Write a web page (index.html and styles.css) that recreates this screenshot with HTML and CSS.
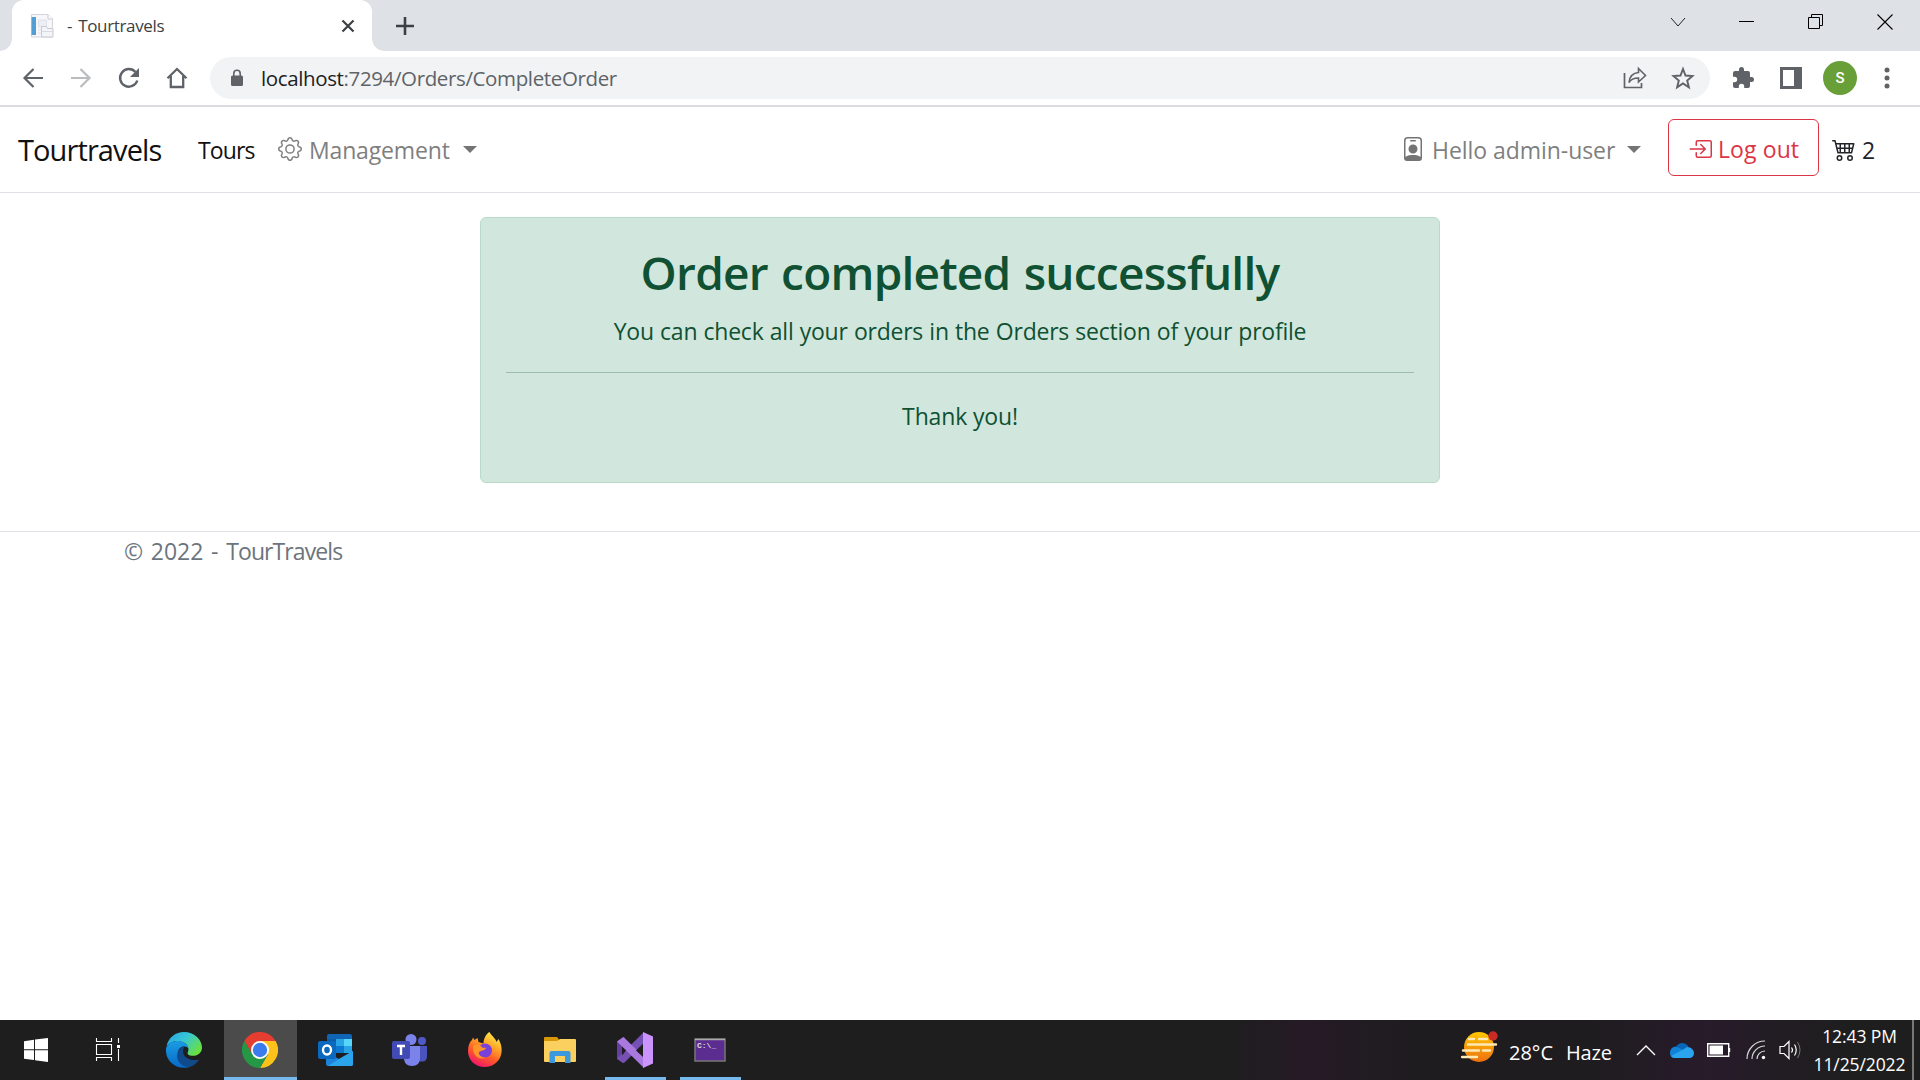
FILE: index.html
```html
<!DOCTYPE html>
<html lang="en">
<head>
<meta charset="utf-8">
<title>- Tourtravels</title>
<link rel="stylesheet" href="styles.css">
</head>
<body>
<header class="tabstrip">
  <div class="tab">
    <svg class="favicon" width="24" height="24" viewBox="0 0 24 24"><path d="M1.500 .5H18l4.500 4.500V23H1.500z" fill="#f7f7f9" stroke="#d5d6da"/><path d="M18 .5V5h4.500" fill="#fff" stroke="#c9cbd0"/><path d="M1.500 3H6v18H1.500z" fill="#539fd3"/><path d="M8.500 6h8v7h-8z" fill="#eceef4" stroke="#dfe2ea"/><path d="M8 16h3M8 19h3" stroke="#dfe2ea"/><path d="M11.500 12.500h5l1 2h5.500v8.500H11.500z" fill="#f3f4f8" stroke="#c8cbd3"/><path d="M12 17.500h11" stroke="#d8dbe3"/></svg>
    <span class="tab-title">- Tourtravels</span>
    <svg class="tab-close" width="14" height="14" viewBox="0 0 14 14"><path d="M1.500 1.500l11 11M12.500 1.500l-11 11" stroke="#3c4043" stroke-width="2.200"/></svg>
  </div>
  <svg class="new-tab" width="18" height="18" viewBox="0 0 18 18"><path d="M9 0v18M0 9h18" stroke="#3c4043" stroke-width="2.600"/></svg>
  <div class="window-controls">
    <svg width="16" height="16" viewBox="0 0 16 16"><path d="M1 4l7 8 7-8" fill="none" stroke="#222"/></svg>
    <svg width="16" height="16" viewBox="0 0 16 16"><path d="M0 7.500h15" stroke="#000"/></svg>
    <svg width="16" height="16" viewBox="0 0 16 16"><path d="M.5 3.500h11v11H.5zM3.500 3.500V.5h11v11h-3" fill="none" stroke="#000"/></svg>
    <svg width="16" height="16" viewBox="0 0 16 16"><path d="M.5 .5l15 15M15.500 .5l-15 15" stroke="#000" stroke-width="1.100"/></svg>
  </div>
</header>
<div class="toolbar">
  <div class="nav-buttons">
    <svg width="24" height="24" viewBox="0 0 24 24"><path d="M22 12H4M12.500 3L3.500 12l9 9" fill="none" stroke="#5f6368" stroke-width="2.200"/></svg>
    <svg width="24" height="24" viewBox="0 0 24 24"><path d="M2 12h18M11.500 3l9 9-9 9" fill="none" stroke="#babcbe" stroke-width="2.200"/></svg>
    <svg width="24" height="24" viewBox="0 0 24 24"><path d="M20.300 14.500A8.800 8.800 0 1 1 18.500 6" fill="none" stroke="#5f6368" stroke-width="2.400"/><path d="M22 2v9h-9z" fill="#5f6368"/></svg>
    <svg width="24" height="24" viewBox="0 0 24 24"><path d="M2.500 12.300L12 3l9.500 9.300M5.800 10v11h12.400V10" fill="none" stroke="#5f6368" stroke-width="2.300"/></svg>
  </div>
  <div class="omnibox">
    <svg class="lock" width="14" height="18" viewBox="0 0 14 18"><rect x="1" y="6.500" width="12" height="10.500" rx="1.500" fill="#5f6368"/><path d="M3.800 7V4.500a3.200 3.200 0 0 1 6.400 0V7" fill="none" stroke="#5f6368" stroke-width="1.600"/></svg>
    <span class="url"><span class="host">localhost</span>:7294/Orders/CompleteOrder</span>
    <svg class="share" width="24" height="24" viewBox="0 0 24 24"><path d="M1.500 7v14.500h17V17" fill="none" stroke="#5f6368" stroke-width="1.700"/><path d="M15.500 2.500l7 7-7 6.500v-4c-5 0-7.800 1.500-9.500 4.500.5-5.500 3.500-9.500 9.500-10z" fill="none" stroke="#5f6368" stroke-width="1.600"/></svg>
    <svg width="24" height="24" viewBox="0 0 24 24"><path d="M12 3l2.500 6.500 7 .5-5.300 4.500 1.700 6.800L12 17.500l-5.900 3.800 1.700-6.800L2.500 10l7-.5z" fill="none" stroke="#5f6368" stroke-width="1.900"/></svg>
  </div>
  <div class="toolbar-actions">
    <svg width="24" height="24" viewBox="0 0 24 24"><path d="M20.500 11H19V7a2 2 0 0 0-2-2h-4V3.500a2.500 2.500 0 0 0-5 0V5H4a2 2 0 0 0-2 2v3.800h1.500a2.700 2.700 0 0 1 0 5.400H2V20a2 2 0 0 0 2 2h3.800v-1.500a2.700 2.700 0 0 1 5.400 0V22H17a2 2 0 0 0 2-2v-4h1.500a2.500 2.500 0 0 0 0-5z" fill="#5f6368"/></svg>
    <svg class="panel" width="22" height="22" viewBox="0 0 22 22"><path d="M0 0h22v22H0zM3 3v16h11V3z" fill="#5f6368" fill-rule="evenodd"/></svg>
    <span class="avatar">S</span>
    <svg class="dots" width="6" height="22" viewBox="0 0 6 22"><g fill="#5f6368"><circle cx="3" cy="3" r="2.500"/><circle cx="3" cy="11" r="2.500"/><circle cx="3" cy="19" r="2.500"/></g></svg>
  </div>
</div>
<nav class="navbar">
  <span class="brand">Tourtravels</span>
  <span class="tours">Tours</span>
  <svg class="gear" width="24" height="24" viewBox="0 0 16 16" fill="#7f7f7f"><path d="M8 4.754a3.246 3.246 0 1 0 0 6.492 3.246 3.246 0 0 0 0-6.492zM5.754 8a2.246 2.246 0 1 1 4.492 0 2.246 2.246 0 0 1-4.492 0z"/><path d="M9.796 1.343c-.527-1.790-3.065-1.790-3.592 0l-.094.319a.873.873 0 0 1-1.255.52l-.292-.16c-1.640-.892-3.433.902-2.540 2.541l.159.292a.873.873 0 0 1-.52 1.255l-.319.094c-1.790.527-1.790 3.065 0 3.592l.319.094a.873.873 0 0 1 .52 1.255l-.16.292c-.892 1.640.901 3.434 2.541 2.540l.292-.159a.873.873 0 0 1 1.255.52l.094.319c.527 1.790 3.065 1.790 3.592 0l.094-.319a.873.873 0 0 1 1.255-.52l.292.16c1.640.893 3.434-.902 2.540-2.541l-.159-.292a.873.873 0 0 1 .52-1.255l.319-.094c1.790-.527 1.790-3.065 0-3.592l-.319-.094a.873.873 0 0 1-.52-1.255l.16-.292c.893-1.640-.902-3.433-2.541-2.540l-.292.159a.873.873 0 0 1-1.255-.52l-.094-.319zm-2.633.283c.246-.835 1.428-.835 1.674 0l.094.319a1.873 1.873 0 0 0 2.693 1.115l.291-.16c.764-.415 1.600.42 1.184 1.185l-.159.292a1.873 1.873 0 0 0 1.116 2.692l.318.094c.835.246.835 1.428 0 1.674l-.319.094a1.873 1.873 0 0 0-1.115 2.693l.16.291c.415.764-.42 1.600-1.185 1.184l-.291-.159a1.873 1.873 0 0 0-2.693 1.116l-.094.318c-.246.835-1.428.835-1.674 0l-.094-.319a1.873 1.873 0 0 0-2.692-1.115l-.292.16c-.764.415-1.600-.42-1.184-1.185l.159-.291A1.873 1.873 0 0 0 1.945 8.930l-.319-.094c-.835-.246-.835-1.428 0-1.674l.319-.094A1.873 1.873 0 0 0 3.060 4.377l-.16-.292c-.415-.764.42-1.600 1.185-1.184l.292.159a1.873 1.873 0 0 0 2.692-1.115l.094-.319z"/></svg>
  <span class="management">Management</span>
  <span class="caret"></span>
  <svg class="badge" width="24" height="24" viewBox="0 0 16 16" fill="#747474"><path d="M6.500 2a.5.5 0 0 0 0 1h3a.5.5 0 0 0 0-1h-3zM11 8a3 3 0 1 1-6 0 3 3 0 0 1 6 0z"/><path d="M4.500 0A2.500 2.500 0 0 0 2 2.500V14a2 2 0 0 0 2 2h8a2 2 0 0 0 2-2V2.500A2.500 2.500 0 0 0 11.500 0h-7zM3 2.500A1.500 1.500 0 0 1 4.500 1h7A1.500 1.500 0 0 1 13 2.500v10.795a4.200 4.200 0 0 0-.776-.492C11.392 12.387 10.063 12 8 12s-3.392.387-4.224.803a4.200 4.200 0 0 0-.776.492V2.500z"/></svg>
  <span class="hello">Hello admin-user</span>
  <span class="caret"></span>
  <span class="logout">
    <svg width="24" height="24" viewBox="0 0 16 16" fill="#dc3545"><path d="M6 3.500a.5.5 0 0 1 .5-.5h8a.5.5 0 0 1 .5.5v9a.5.5 0 0 1-.5.5h-8a.5.5 0 0 1-.5-.5v-2a.5.5 0 0 0-1 0v2A1.500 1.500 0 0 0 6.500 14h8a1.500 1.500 0 0 0 1.500-1.500v-9A1.500 1.500 0 0 0 14.500 2h-8A1.500 1.500 0 0 0 5 3.500v2a.5.5 0 0 0 1 0v-2z"/><path d="M11.854 8.354a.5.5 0 0 0 0-.708l-3-3a.5.5 0 1 0-.708.708L10.293 7.500H1.500a.5.5 0 0 0 0 1h8.793l-2.147 2.146a.5.5 0 0 0 .708.708l3-3z"/></svg>
    <span class="logout-text">Log out</span>
  </span>
  <svg class="cart" width="24" height="24" viewBox="0 0 16 16" fill="#212529"><path d="M0 2.500A.5.5 0 0 1 .5 2H2a.5.5 0 0 1 .485.379L2.890 4H14.500a.5.5 0 0 1 .485.621l-1.500 6A.5.5 0 0 1 13 11H4a.5.5 0 0 1-.485-.379L1.610 3H.5a.5.5 0 0 1-.5-.5zM3.140 5l.5 2H5V5H3.140zM6 5v2h2V5H6zm3 0v2h2V5H9zm3 0v2h1.360l.5-2H12zm1.110 3H12v2h.610l.5-2zM11 8H9v2h2V8zM8 8H6v2h2V8zM5 8H3.890l.5 2H5V8zm0 5a1 1 0 1 0 0 2 1 1 0 0 0 0-2zm-2 1a2 2 0 1 1 4 0 2 2 0 0 1-4 0zm9-1a1 1 0 1 0 0 2 1 1 0 0 0 0-2zm-2 1a2 2 0 1 1 4 0 2 2 0 0 1-4 0z"/></svg>
  <span class="count">2</span>
</nav>
<main class="page">
  <section class="alert">
    <h1 class="alert-title">Order completed successfully</h1>
    <p class="alert-text">You can check all your orders in the Orders section of your profile</p>
    <hr class="rule">
    <p class="thanks">Thank you!</p>
  </section>
</main>
<footer class="footer">© 2022 - <span class="company">TourTravels</span></footer>
<div class="taskbar">
  <div class="apps">
    <div class="app start"><svg width="24" height="24" viewBox="0 0 24 24"><path d="M0 3.200l10-1.500V11.200H0zM11 1.500L24 0v11.200H11zM0 12.300h10v9.800L0 20.800zM11 12.300h13V24l-13-1.700z" fill="#fff"/></svg></div>
    <div class="app task-view"><svg width="26" height="26" viewBox="0 0 26 26"><path d="M1.500 1v3.500h15V1M1.500 7.500h15v10h-15zM1.500 24v-3.500h15V24M23.500 1v5M23.500 12v12" fill="none" stroke="#fff" stroke-width="1.100"/><path d="M22 8h3v3h-3z" fill="#fff"/></svg></div>
    <div class="app edge"><svg width="36" height="36" viewBox="0 0 36 36"><defs><linearGradient id="edgeTop" x1="0" y1="0" x2="1" y2=".6"><stop offset="0" stop-color="#269fe2"/><stop offset=".5" stop-color="#36c6d6"/><stop offset="1" stop-color="#68e043"/></linearGradient><linearGradient id="edgeLow" x1="0" y1="0" x2="0" y2="1"><stop offset="0" stop-color="#1b9de4"/><stop offset="1" stop-color="#0868c7"/></linearGradient></defs><path d="M.5 14C3 5 9.500 0 18 0c10 0 18 7.500 18 15.500 0 5-4 8.300-9 8.300-4 0-6.500-1.500-5-4C24 15 20 9.500 12 9 7 9 3 11 .5 14z" fill="url(#edgeTop)"/><path d="M.1 16C2 11 6.500 9 12 9c6 0 10.500 4 10.500 7.500C20 13 13 14 12 20c-.8 6 4 12 10.500 15.400C10 38-1.500 29 .1 16z" fill="url(#edgeLow)"/><path d="M18.500 14C8 18 8 32 22 35.400c5-1 9-4.500 11.300-8.500-3 1.500-8 1.500-12-.8-4.300-2.500-5.300-7.600-2.800-12.100z" fill="#114a8b"/><path d="M18.500 14.300c-1.700 2-1.800 7 2 10.300 4 3 9 2.500 12.500.7l1 .3-.7 1.300c-3 1.500-8 1.500-12-.8-4.300-2.500-5.300-7.600-2.800-11.800z" fill="#1e1e1e"/></svg></div>
    <div class="app chrome"><svg width="36" height="36" viewBox="0 0 36 36"><path d="M2.400 9A18 18 0 0 1 33.600 9H18L10.200 22.500z" fill="#e53d30"/><path d="M33.600 9A18 18 0 0 1 18 36l7.800-13.500L18 9z" fill="#fcc21b"/><path d="M18 36A18 18 0 0 1 2.400 9l7.800 13.500L25.800 22.500z" fill="#259845"/><circle cx="18" cy="18" r="9" fill="#fff"/><circle cx="18" cy="18" r="7.200" fill="#3a7bed"/></svg></div>
    <div class="app"><svg width="36" height="34" viewBox="0 0 36 34"><path d="M10 3q0-2 2-2h21q2 0 2 2v15H10z" fill="#1066b5"/><path d="M10 6h9v7h-9z" fill="#0f5ba6"/><path d="M19 6h8v7h-8z" fill="#29a5e7"/><path d="M27 6h8v7h-8z" fill="#56d7fa"/><path d="M19 13h8v7h-8z" fill="#0d78cf"/><path d="M27 13h8v7h-8z" fill="#28a3e8"/><path d="M9 19l13 7 14-8v13q0 2-2 2H11q-2 0-2-2z" fill="#1c83da"/><path d="M36 18v13q0 2-2 2H11l11-7z" fill="#2ba4ec"/><rect x="1" y="8" width="18" height="18" rx="2" fill="#0b68bf"/><ellipse cx="10" cy="17" rx="4" ry="4.500" fill="none" stroke="#fff" stroke-width="2.400"/></svg></div>
    <div class="app"><svg width="36" height="34" viewBox="0 0 36 34"><circle cx="30" cy="8" r="4" fill="#5059c9"/><path d="M26 13h9v10c0 4-2 6-6 5.500h-3z" fill="#4b53bc"/><circle cx="19" cy="6.500" r="5.500" fill="#7b83eb"/><path d="M12 13h16v12c0 5-3 8-8 8s-8-3-8-8z" fill="#7b83eb"/><rect x="0" y="8" width="18" height="18" rx="2" fill="#424bb4"/><path d="M5 13h8M9 13v9" stroke="#fff" stroke-width="2.400"/></svg></div>
    <div class="app"><svg width="36" height="36" viewBox="0 0 36 36"><defs><linearGradient id="fox" x1=".8" y1="0" x2=".3" y2="1"><stop offset="0" stop-color="#fff44f"/><stop offset=".35" stop-color="#ffa928"/><stop offset=".65" stop-color="#ff5c28"/><stop offset="1" stop-color="#f2126d"/></linearGradient></defs><path d="M22.500 0c2 4 6 6 7 10l2-3c3 5 4 11 2.500 16-2 7.500-9 12-16.500 12C8 35 1 28 1 19c0-5 1.500-9 4-11l1-2.500L7.500 8l3-2 1 4 5 1.500c0-5 2.500-9.500 6-11.500z" fill="url(#fox)"/><circle cx="18" cy="18.500" r="7" fill="#7941da"/><path d="M6 14c4-3 8-1 9 1.500 2 .5 3.500 0 4 .5-1 3-5 2-7 4-1.500 2 2 6 7 5.500-6 3-14-1-13-11.500z" fill="#ff9528"/></svg></div>
    <div class="app"><svg width="34" height="28" viewBox="0 0 34 28"><path d="M1 2q0-1 1-1h12l2 2.500V8H1z" fill="#d89706"/><path d="M1 5h13l3-2h15q1 0 1 1v21q0 1-1 1H2q-1 0-1-1z" fill="#fbd05f"/><path d="M6.500 27V17q0-2 2-2h17q2 0 2 2v10h-5.500v-7H12v7z" fill="#3d98dc"/></svg></div>
    <div class="app running"><svg width="36" height="36" viewBox="0 0 36 36"><path d="M0 9.500L6.500 5 8 6v22l-2 3-6-4z" fill="#643ea3"/><path d="M27 0v11L7.500 30.500 6 31l-6-4.500z" fill="#7650b2"/><path d="M6.500 5L27 25v11L0 9.500z" fill="#a979df"/><path d="M26 0l10 4.500v27L26 36z" fill="#cb93fc"/><path d="M5 14.500l4 4-4 5z" fill="#1e1e1e"/><path d="M26 12v13l-7-6.500z" fill="#1e1e1e"/></svg></div>
    <div class="app running"><svg width="32" height="24" viewBox="0 0 32 24"><rect x="1" y="1" width="30" height="22" fill="#5c2d91" stroke="#777" stroke-width="1.500"/><path d="M1 1.500h30" stroke="#aaa" stroke-width="1.500"/><text class="console-text" x="3" y="10">C:\_</text></svg></div>
  </div>
  <div class="tray">
    <svg class="weather" width="38" height="32" viewBox="0 0 38 32"><defs><linearGradient id="sun" x1="0" y1="0" x2="0" y2="1"><stop offset="0" stop-color="#ffc701"/><stop offset="1" stop-color="#ee7010"/></linearGradient></defs><circle cx="18" cy="16" r="15" fill="url(#sun)"/><path d="M8 8h5M18 8h8M7 13.500h28M2 19.500h16M22 19.500h7M1 26h15" stroke="#ffe9b5" stroke-width="2.400" stroke-linecap="round"/><circle cx="32" cy="5" r="4.700" fill="#ca2b23"/></svg>
    <span class="temp">28°C</span><span class="haze">Haze</span>
    <svg class="up" width="20" height="12" viewBox="0 0 20 12"><path d="M1 11l9-9 9 9" fill="none" stroke="#fff" stroke-width="1.400"/></svg>
    <svg class="cloud" width="24" height="16" viewBox="0 0 24 16"><path d="M6 5a7 7 0 0 1 12-1c2 3-1 8-6 9z" fill="#0766b8"/><path d="M0 11c0-4 3-7 7-6l9 4-3 7H5c-3 0-5-2-5-5z" fill="#1081d5"/><path d="M17 5c4 0 7 3 7 6s-2 5-5 5H5c-2 0-3-1-4-2L14 7z" fill="#2aa4ee"/></svg>
    <svg class="battery" width="24" height="14" viewBox="0 0 24 14"><path d="M.7 .7h21v12.600H.7zM22.500 5v4" fill="none" stroke="#fff" stroke-width="1.400"/><path d="M2.500 2.500H16v9H2.500z" fill="#fff"/></svg>
    <svg class="wifi" width="20" height="20" viewBox="0 0 20 20"><path d="M1 19A18 18 0 0 1 19 1M6 19A13 13 0 0 1 19 6M11 19a8 8 0 0 1 8-8" fill="none" stroke="#d9d9d9" stroke-width="1.200"/><circle cx="17.500" cy="17.500" r="1.700" fill="#fff"/></svg>
    <svg class="sound" width="22" height="20" viewBox="0 0 22 20"><path d="M1 6.500h4l5-5v17l-5-5H1zM12.500 7.500q2 2.500 0 5M15.500 4.500q3.500 5.500 0 11" fill="none" stroke="#fff" stroke-width="1.200"/><path d="M18.500 2q5 8 0 16" fill="none" stroke="#777"/></svg>
    <div class="clock"><span class="time">12:43 PM</span><span class="date">11/25/2022</span></div>
    <span class="peek"></span>
  </div>
</div>
</body>
</html>
```
FILE: styles.css
```css
* { box-sizing: border-box; }
body { margin: 0; width: 1920px; height: 1080px; overflow: hidden; display: flex; flex-direction: column; background: #fff; color: #212529; font-family: "Open Sans", "Noto Sans", sans-serif; font-size: 23px; }
svg { display: block; flex: none; }
span { white-space: nowrap; }

.tabstrip { height: 51px; flex: none; display: flex; background: #dee1e6; padding-left: 12px; }
.tab { position: relative; width: 360px; height: 51px; background: #fff; border-radius: 12px 12px 0 0; display: flex; align-items: center; padding-left: 18px; }
.tab::before, .tab::after { content: ""; position: absolute; bottom: 0; width: 12px; height: 12px; }
.tab::before { left: -12px; background: radial-gradient(circle at 0 0, transparent 11.5px, #fff 12px); }
.tab::after { right: -12px; background: radial-gradient(circle at 100% 0, transparent 11.5px, #fff 12px); }
.tab-title { margin-left: 13px; width: 274px; font-size: 17px; letter-spacing: -.35px; word-spacing: 2px; color: #3c4043; }
.new-tab { margin: 17px 0 0 24px; }
.window-controls { margin: 14px 27px 0 auto; display: flex; gap: 53px; }

.toolbar { height: 56px; flex: none; display: flex; align-items: center; border-bottom: 2px solid #dadce0; padding: 0 30px 0 21px; }
.nav-buttons { display: flex; gap: 24px; }
.omnibox { margin-left: 21px; width: 1500px; height: 42px; border-radius: 21px; background: #f1f3f4; display: flex; align-items: center; padding: 0 15px 0 20px; }
.url { margin-left: 17px; font-size: 20.5px; letter-spacing: -.37px; color: #5f6368; }
.host { color: #202124; }
.share { margin: 0 24px 0 auto; }
.toolbar-actions { flex: 1; display: flex; align-items: center; padding-left: 21px; }
.panel { margin: 0 21px 0 25px; }
.avatar { width: 34px; height: 34px; border-radius: 50%; background: #689f38; color: #fff; font: 500 15px/34px Roboto, sans-serif; text-align: center; }
.dots { margin-left: auto; }

.navbar { height: 86px; flex: none; display: flex; align-items: center; border-bottom: 1px solid #dee2e6; padding: 0 0 1px 18px; }
.brand { width: 180px; font-size: 29px; letter-spacing: -.9px; color: #111; }
.tours { width: 79px; padding-top: 1px; letter-spacing: -.9px; color: #111; }
.gear { margin-left: 1px; }
.management { margin-left: 7px; width: 154px; padding-top: 2px; letter-spacing: -.15px; color: #7f7f7f; }
.caret { border: 7px solid transparent; border-top-color: #747474; border-bottom: 0; }
.badge { margin-left: auto; }
.hello { margin-left: 7px; width: 195px; padding-top: 2px; letter-spacing: -.05px; color: #7f7f7f; }
.logout { margin: 0 13px 4px 27px; width: 151px; height: 57px; border: 1px solid #dc3545; border-radius: 6px; padding: 3px 0 0 19px; display: flex; align-items: center; color: #dc3545; }
.logout-text { margin-left: 6px; padding-top: 1px; letter-spacing: .1px; }
.count { margin-left: 6px; width: 58px; padding-top: 2px; }

.page { padding: 24px 480px 0; flex: none; height: 338px; }
.alert { height: 266px; background: #d1e7dd; border: 1px solid #badbcc; border-radius: 6px; padding: 24px 25px; color: #0f5132; text-align: center; white-space: nowrap; }
.alert-title { margin: 0; font-size: 46px; line-height: 60px; font-weight: 600; letter-spacing: -.75px; word-spacing: 2px; }
.alert-text { margin: 11px 0 0; line-height: 36px; letter-spacing: -.23px; word-spacing: .5px; }
.rule { margin: 23px 0 0; border: 0; height: 1px; background: #0f5132; opacity: .27; }
.thanks { margin: 25px 0 0; line-height: 36px; letter-spacing: -.15px; }

.footer { flex: 1; border-top: 1px solid #dee2e6; padding: 1px 0 0 124px; line-height: 36px; color: #6c757d; word-spacing: 1.7px; }
.company { letter-spacing: -.9px; }

.taskbar { height: 60px; flex: none; display: flex; justify-content: space-between; background: linear-gradient(90deg, #1e1e1e 64%, #251a26 68%, #1f1c20 73%, #1f1c20 83%, #281b2b 89%, #211d22 93%, #1e1e1e 97%); color: #fff; }
.apps { display: flex; }
.app { width: 75px; height: 60px; display: flex; align-items: center; justify-content: center; }
.start, .task-view { width: 72px; }
.edge { width: 80px; }
.chrome { width: 73px; background: #4b4b4b; border-bottom: 3px solid #76b9ed; padding: 3px 1px 0 0; }
.running { background: linear-gradient(#76b9ed, #76b9ed) 8px 57px / 61px 3px no-repeat; }
.console-text { font: bold 8px "Liberation Mono", monospace; fill: #ddd; }
.tray { display: flex; align-items: center; }
.weather { margin-bottom: 6px; }
.temp { margin: 4px 0 0 10px; width: 57px; font-size: 20px; }
.haze { margin-top: 4px; width: 70px; font-size: 20px; letter-spacing: -.2px; }
.up { margin-right: 14px; }
.cloud { margin-right: 13px; }
.battery { margin-right: 15px; }
.wifi { margin-right: 13px; }
.clock { margin-left: 11px; width: 95px; display: flex; flex-direction: column; align-items: center; font-size: 17.5px; line-height: 28px; letter-spacing: -.1px; }
.peek { width: 2px; height: 60px; margin: 0 6px 0 5px; background: #777; }
```
